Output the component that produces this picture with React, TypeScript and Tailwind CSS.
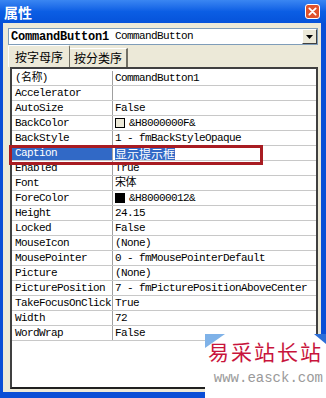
import React from "react";

const mono = { fontFamily: '"Liberation Mono", "Noto Sans CJK SC", monospace' };
const cjk = { fontFamily: '"Noto Sans CJK SC", "Liberation Sans", sans-serif' };

type Row = { name: string; value: React.ReactNode; selected?: boolean };

const rows: Row[] = [
  { name: "(名称)", value: "CommandButton1" },
  { name: "Accelerator", value: "" },
  { name: "AutoSize", value: "False" },
  {
    name: "BackColor",
    value: (
      <span className="flex items-center gap-[4px]">
        <span className="inline-block w-[10px] h-[10px] border border-black bg-[#ECE9D8]" />
        &amp;H8000000F&amp;
      </span>
    ),
  },
  { name: "BackStyle", value: "1 - fmBackStyleOpaque" },
  { name: "Caption", value: "显示提示框", selected: true },
  { name: "Enabled", value: "True" },
  { name: "Font", value: "宋体" },
  {
    name: "ForeColor",
    value: (
      <span className="flex items-center gap-[4px]">
        <span className="inline-block w-[10px] h-[10px] border border-black bg-black" />
        &amp;H80000012&amp;
      </span>
    ),
  },
  { name: "Height", value: "24.15" },
  { name: "Locked", value: "False" },
  { name: "MouseIcon", value: "(None)" },
  { name: "MousePointer", value: "0 - fmMousePointerDefault" },
  { name: "Picture", value: "(None)" },
  { name: "PicturePosition", value: "7 - fmPicturePositionAboveCenter" },
  { name: "TakeFocusOnClick", value: "True" },
  { name: "Width", value: "72" },
  { name: "WordWrap", value: "False" },
];

function PropRow({ row }: { row: Row }) {
  return (
    <div className="flex h-[15px] border-b border-[#C8C8C8] text-[11px] leading-[14px] tracking-[-0.6px] text-black" style={mono}>
      <div
        className={
          row.selected
            ? "w-[101px] shrink-0 border-r border-[#A0A0A0] pl-[3px] bg-[#3169C6] text-white whitespace-nowrap overflow-hidden"
            : "w-[101px] shrink-0 border-r border-[#A0A0A0] pl-[3px] whitespace-nowrap overflow-hidden"
        }
      >
        {row.name}
      </div>
      <div className="flex-1 pl-[2px] whitespace-nowrap flex items-center">
        {row.selected ? (
          <span className="bg-[#3169C6] text-white text-[12px] leading-[13px] tracking-normal" style={cjk}>
            {row.value}
          </span>
        ) : (
          row.value
        )}
      </div>
    </div>
  );
}

export default function App() {
  return (
    <div className="relative w-[326px] h-[398px] overflow-hidden bg-[#0A4ED6] flex flex-col">
      {/* title bar */}
      <div className="h-[23px] shrink-0 flex items-center justify-between pl-[4px] pr-[6px] bg-gradient-to-b from-[#3A86F2] via-[#0B5EE4] to-[#0652DA]">
        <span className="text-white font-bold text-[14px] leading-none" style={cjk}>
          属性
        </span>
        <div className="w-[15px] h-[15px] rounded-[3px] border border-white bg-[#E0522B] flex items-center justify-center">
          <svg viewBox="0 0 10 10" className="w-[9px] h-[9px]">
            <path d="M1.5 1.5 8.5 8.5M8.5 1.5 1.5 8.5" stroke="white" strokeWidth="2" strokeLinecap="round" />
          </svg>
        </div>
      </div>

      {/* body */}
      <div className="flex-1 ml-[3px] mr-[5px] mb-[6px] bg-[#ECE9D8] flex flex-col pl-[5px] pr-[3px] pt-[5px] pb-[3px]">
        {/* object combo */}
        <div className="h-[17px] shrink-0 flex items-center bg-white border border-[#7F9DB9]">
          <div className="flex-1 flex items-center pl-[2px] text-[12px] leading-none whitespace-nowrap" style={mono}>
            <span className="font-bold tracking-[-0.2px]">CommandButton1</span>
            <span className="ml-[6px] text-[11px] tracking-[-0.6px]">CommandButton</span>
          </div>
          <div className="w-[15px] h-[15px] flex items-center justify-center bg-[#ECE9D8] border border-t-white border-l-white border-r-[#404040] border-b-[#404040]">
            <svg viewBox="0 0 7 4" className="w-[7px] h-[4px]">
              <path d="M0 0h7L3.5 4z" fill="black" />
            </svg>
          </div>
        </div>

        {/* tabs */}
        <div className="h-[22px] shrink-0 flex items-end">
          <div className="h-[22px] w-[62px] flex items-center justify-center border-l border-t border-white border-r border-r-[#716F64] rounded-t-[2px] text-[12px] text-black" style={cjk}>
            按字母序
          </div>
          <div className="h-[19px] w-[58px] flex items-center justify-center border-t border-white border-r-2 border-r-[#716F64] text-[12px] text-black" style={cjk}>
            按分类序
          </div>
        </div>

        {/* property grid */}
        <div className="flex-1 ml-[2px] bg-white border-2 border-[#404040] border-b-[#202020] pt-[2px]" style={cjk}>
          {rows.map((r) => (
            <PropRow key={r.name} row={r} />
          ))}
        </div>
      </div>

      {/* annotation box */}
      <div className="absolute left-[9px] top-[145px] w-[254px] h-[20px] border-[3px] border-[#A81C22]" />

      {/* watermark */}
      <div className="absolute right-0 bottom-0 w-[121px] h-[64px] bg-white flex flex-col items-end pr-[3px] pt-[4px]">
        <svg viewBox="0 0 20 14" className="absolute left-0 top-0 w-[20px] h-[14px]">
          <path d="M0 14 20 0H0z" fill="#7FB2E8" />
        </svg>
        <svg viewBox="0 0 12 10" className="absolute right-0 top-0 w-[12px] h-[10px]">
          <path d="M0 0h12v10z" fill="#2C6FD8" />
        </svg>
        <span className="text-[21px] leading-[26px] tracking-[2px] text-[#C8143C]" style={cjk}>
          易采站长站
        </span>
        <span className="mt-[6px] text-[14px] leading-[16px] text-[#9A9A9A]" style={mono}>
          www.easck.com
        </span>
      </div>
    </div>
  );
}
